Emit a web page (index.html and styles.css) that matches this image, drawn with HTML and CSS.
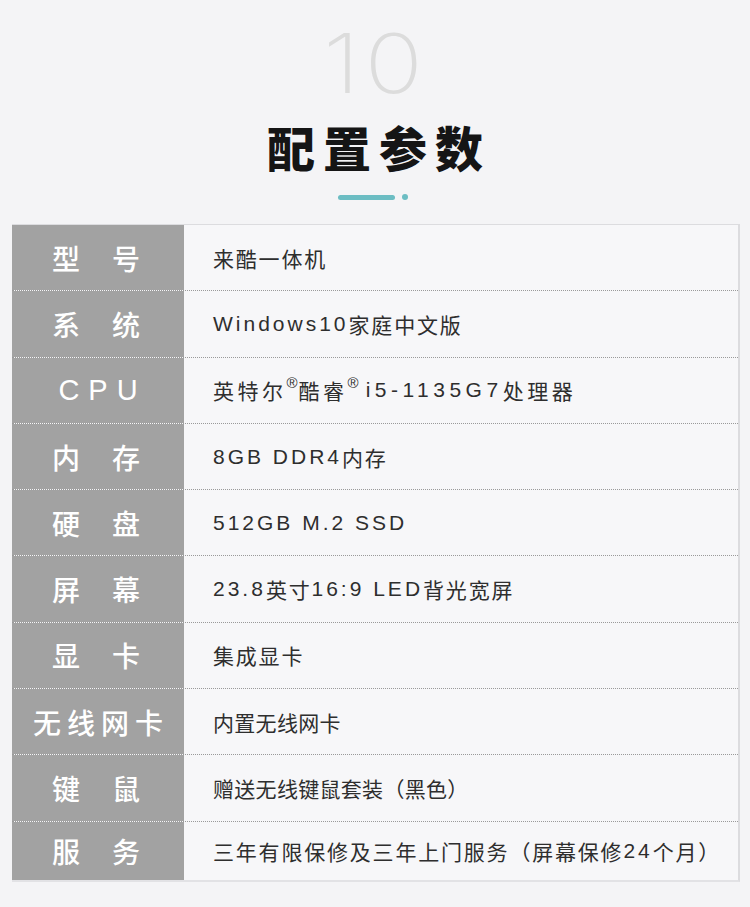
FILE: index.html
```html
<!DOCTYPE html>
<html lang="zh-CN">
<head>
    <meta charset="UTF-8">
    <meta name="viewport" content="width=device-width, initial-scale=1.0">
    <title>配置参数</title>
    <link rel="stylesheet" href="styles.css">
</head>
<body>
    <div class="header">
        <div class="num">10</div>
        <h1>配置参数</h1>
        <div class="bar"><span class="line"></span><span class="dot"></span></div>
    </div>

    <div class="spec">
        <div class="row"><div class="label two">型号</div><div class="value">来酷一体机</div></div>
        <div class="row"><div class="label two">系统</div><div class="value"><span class="en">Windows10</span>家庭中文版</div></div>
        <div class="row"><div class="label cpu">CPU</div><div class="value wide">英特尔<sup>®</sup>酷睿<sup>®</sup> <span class="en">i5-1135G7</span>处理器</div></div>
        <div class="row"><div class="label two">内存</div><div class="value"><span class="en">8GB DDR4</span>内存</div></div>
        <div class="row"><div class="label two">硬盘</div><div class="value"><span class="en">512GB M.2 SSD</span></div></div>
        <div class="row"><div class="label two">屏幕</div><div class="value"><span class="en">23.8</span>英寸<span class="en">16:9 LED</span>背光宽屏</div></div>
        <div class="row"><div class="label two">显卡</div><div class="value">集成显卡</div></div>
        <div class="row"><div class="label four">无线网卡</div><div class="value tight">内置无线网卡</div></div>
        <div class="row"><div class="label two">键鼠</div><div class="value tight">赠送无线键鼠套装（黑色）</div></div>
        <div class="row"><div class="label two">服务</div><div class="value">三年有限保修及三年上门服务（屏幕保修<span class="en">24</span>个月）</div></div>
    </div>
</body>
</html>
```

FILE: styles.css
```css
body {
    margin: 0;
    background-color: #f4f4f6;
    font-family: "Noto Sans CJK SC", "Noto Sans", sans-serif;
    width: 750px;
    height: 907px;
    overflow: hidden;
}

.header {
    display: flex;
    flex-direction: column;
    align-items: center;
    padding-top: 18px;
}

.num {
    font-family: "Inter", "Noto Sans", sans-serif;
    font-weight: 200;
    font-size: 82px;
    line-height: 92px;
    color: #dcdcdc;
    letter-spacing: 4px;
    margin-left: 0;
    transform: scaleX(1.18);
}

h1 {
    margin: 6px 0 0 8px;
    font-size: 48px;
    line-height: 60px;
    font-weight: 900;
    color: #151515;
    letter-spacing: 8px;
}

.bar {
    display: flex;
    align-items: center;
    gap: 7px;
    margin-top: 18px;
    margin-left: -4px;
}

.bar .line {
    width: 57px;
    height: 5px;
    border-radius: 3px;
    background-color: #6cbdc3;
}

.bar .dot {
    width: 6px;
    height: 6px;
    border-radius: 50%;
    background-color: #6cbdc3;
}

/* tabela de parametros */
.spec {
    margin: 24px 0 0 12px;
    width: 726px;
    border-top: 1px solid #dcdcdf;
    border-right: 2px solid #dcdcdf;
    border-bottom: 2px solid #e2e2e5;
    background-color: #f7f7f9;
}

.row {
    display: flex;
    height: 65.3px;
    border-bottom: 1px dotted #9a9a9a;
}

.row:last-child {
    border-bottom: none;
    height: 58px;
}

.label {
    width: 172px;
    flex: none;
    background-color: #a2a2a2;
    color: #fff;
    font-size: 28px;
    font-weight: 500;
    display: flex;
    align-items: center;
    justify-content: center;
}

.label.two {
    letter-spacing: 32px;
    text-indent: 28px;
}

.label.cpu {
    font-family: "Liberation Sans", sans-serif;
    font-size: 29px;
    font-weight: 400;
    letter-spacing: 9px;
    text-indent: 9px;
}

.label.four {
    letter-spacing: 6px;
    text-indent: 6px;
}

.value {
    display: flex;
    align-items: center;
    padding-left: 29px;
    font-size: 21px;
    color: #2e2e2e;
    letter-spacing: 1.8px;
    white-space: pre;
}

.value .en {
    font-family: "Liberation Sans", sans-serif;
    letter-spacing: 3px;
}

.value.tight {
    letter-spacing: 0.3px;
}

/* linha do processador, mais espaçada */
.value.wide {
    letter-spacing: 3.5px;
}

.value.wide .en {
    letter-spacing: 4.5px;
    margin-left: 6px;
}

.value sup {
    font-size: 15px;
    font-family: "Liberation Sans", sans-serif;
    align-self: flex-start;
    margin-top: 16px;
    letter-spacing: 1px;
}
```
